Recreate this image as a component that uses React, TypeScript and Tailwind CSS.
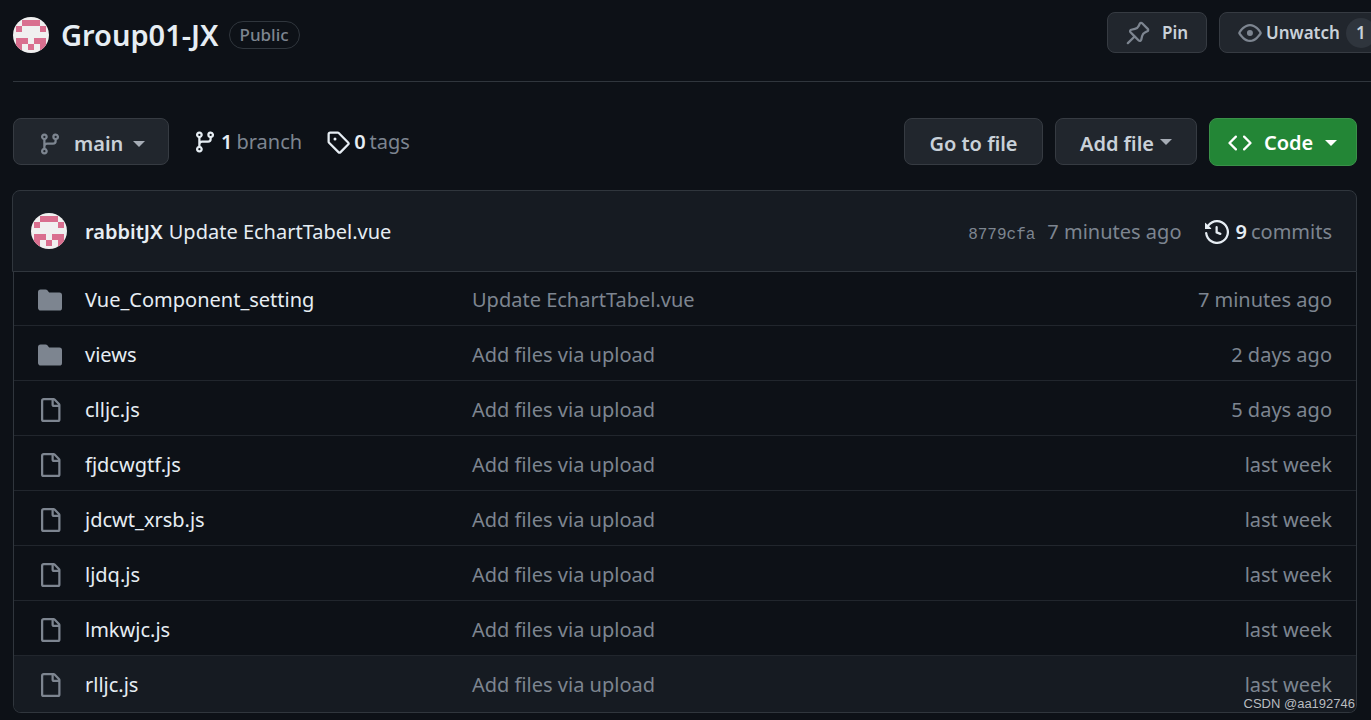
import type { ReactNode } from "react";
import clsx from "clsx";

const icons = {
  branch:
    "M9.5 3.25a2.25 2.25 0 1 1 3 2.122V6A2.5 2.5 0 0 1 10 8.5H6a1 1 0 0 0-1 1v1.128a2.251 2.251 0 1 1-1.5 0V5.372a2.25 2.25 0 1 1 1.5 0v1.836A2.493 2.493 0 0 1 6 7h4a1 1 0 0 0 1-1v-.628A2.25 2.25 0 0 1 9.5 3.25Zm-6 0a.75.75 0 1 0 1.5 0 .75.75 0 0 0-1.5 0Zm8.25-.75a.75.75 0 1 0 0 1.5.75.75 0 0 0 0-1.5ZM4.25 12a.75.75 0 1 0 0 1.5.75.75 0 0 0 0-1.5Z",
  tag: "M1 7.775V2.75C1 1.784 1.784 1 2.75 1h5.025c.464 0 .91.184 1.238.513l6.25 6.25a1.75 1.75 0 0 1 0 2.474l-5.026 5.026a1.75 1.75 0 0 1-2.474 0l-6.25-6.25A1.752 1.752 0 0 1 1 7.775Zm1.5 0c0 .066.026.13.073.177l6.25 6.25a.25.25 0 0 0 .354 0l5.025-5.025a.25.25 0 0 0 0-.354l-6.25-6.25a.25.25 0 0 0-.177-.073H2.75a.25.25 0 0 0-.25.25ZM6 5a1 1 0 1 1 0 2 1 1 0 0 1 0-2Z",
  history:
    "m.427 1.927 1.215 1.215a8.002 8.002 0 1 1-1.6 5.685.75.75 0 1 1 1.493-.154 6.5 6.5 0 1 0 1.18-4.458l1.358 1.358A.25.25 0 0 1 3.896 6H.25A.25.25 0 0 1 0 5.75V2.104a.25.25 0 0 1 .427-.177ZM7.75 4a.75.75 0 0 1 .75.75v2.992l2.028.812a.75.75 0 0 1-.557 1.392l-2.5-1A.751.751 0 0 1 7 8.25v-3.5A.75.75 0 0 1 7.75 4Z",
  file: "M2 1.75C2 .784 2.784 0 3.75 0h6.586c.464 0 .909.184 1.237.513l2.914 2.914c.329.328.513.773.513 1.237v9.586A1.75 1.75 0 0 1 13.25 16h-9.5A1.75 1.75 0 0 1 2 14.25Zm1.75-.25a.25.25 0 0 0-.25.25v12.5c0 .138.112.25.25.25h9.5a.25.25 0 0 0 .25-.25V6h-2.75A1.75 1.75 0 0 1 9 4.25V1.5Zm6.75.062V4.25c0 .138.112.25.25.25h2.688l-.011-.013-2.914-2.914-.013-.011Z",
  folder:
    "M1.75 1A1.75 1.75 0 0 0 0 2.75v10.5C0 14.216.784 15 1.75 15h12.5A1.75 1.75 0 0 0 16 13.25v-8.5A1.75 1.75 0 0 0 14.25 3H7.5a.25.25 0 0 1-.2-.1l-.9-1.2C6.07 1.26 5.55 1 5 1H1.75Z",
  pin: "m11.294.984 3.722 3.722a1.75 1.75 0 0 1-.504 2.826l-1.327.613a3.089 3.089 0 0 0-1.707 2.084l-.584 2.454c-.317 1.332-1.972 1.8-2.94.832L5.75 11.311 1.78 15.28a.749.749 0 1 1-1.06-1.06l3.969-3.97-2.204-2.204c-.968-.968-.5-2.623.832-2.94l2.454-.584a3.08 3.08 0 0 0 2.084-1.707l.613-1.327a1.75 1.75 0 0 1 2.826-.504ZM6.283 9.723l2.732 2.731a.25.25 0 0 0 .42-.119l.584-2.454a4.586 4.586 0 0 1 2.537-3.098l1.328-.613a.25.25 0 0 0 .072-.404l-3.722-3.722a.25.25 0 0 0-.404.072l-.613 1.328a4.584 4.584 0 0 1-3.098 2.537l-2.454.584a.25.25 0 0 0-.119.42l2.731 2.732Z",
  eye: "M8 2c1.981 0 3.671.992 4.933 2.078 1.27 1.091 2.187 2.345 2.637 3.023a1.62 1.62 0 0 1 0 1.798c-.45.678-1.367 1.932-2.637 3.023C11.67 13.008 9.981 14 8 14c-1.981 0-3.671-.992-4.933-2.078C1.797 10.83.88 9.576.43 8.898a1.62 1.62 0 0 1 0-1.798c.45-.677 1.367-1.931 2.637-3.022C4.33 2.992 6.019 2 8 2ZM1.679 7.932a.12.12 0 0 0 0 .136c.411.622 1.241 1.75 2.366 2.717C5.176 11.758 6.527 12.5 8 12.5c1.473 0 2.825-.742 3.955-1.715 1.124-.967 1.954-2.096 2.366-2.717a.12.12 0 0 0 0-.136c-.412-.621-1.242-1.75-2.366-2.717C10.824 4.242 9.473 3.5 8 3.5c-1.473 0-2.825.742-3.955 1.715-1.124.967-1.954 2.096-2.366 2.717ZM8 10a2 2 0 1 1-.001-3.999A2 2 0 0 1 8 10Z",
  code: "m11.28 3.22 4.25 4.25a.75.75 0 0 1 0 1.06l-4.25 4.25a.749.749 0 0 1-1.275-.326.749.749 0 0 1 .215-.734L13.94 8l-3.72-3.72a.749.749 0 0 1 .326-1.275.749.749 0 0 1 .734.215Zm-6.56 0a.751.751 0 0 1 1.042.018.751.751 0 0 1 .018 1.042L2.06 8l3.72 3.72a.749.749 0 0 1-.326 1.275.749.749 0 0 1-.734-.215L.47 8.53a.75.75 0 0 1 0-1.06Z",
};

const files: { name: string; message: string; age: string; folder?: boolean }[] = [
  { name: "Vue_Component_setting", message: "Update EchartTabel.vue", age: "7 minutes ago", folder: true },
  { name: "views", message: "Add files via upload", age: "2 days ago", folder: true },
  { name: "clljc.js", message: "Add files via upload", age: "5 days ago" },
  { name: "fjdcwgtf.js", message: "Add files via upload", age: "last week" },
  { name: "jdcwt_xrsb.js", message: "Add files via upload", age: "last week" },
  { name: "ljdq.js", message: "Add files via upload", age: "last week" },
  { name: "lmkwjc.js", message: "Add files via upload", age: "last week" },
  { name: "rlljc.js", message: "Add files via upload", age: "last week" },
];

function Icon({ name, className }: { name: keyof typeof icons; className?: string }) {
  return (
    <svg viewBox="0 0 16 16" fill="currentColor" aria-hidden="true" className={clsx("size-6 shrink-0", className)}>
      <path d={icons[name]} />
    </svg>
  );
}

function Caret({ className }: { className?: string }) {
  return (
    <svg viewBox="0 0 12 6" fill="currentColor" aria-hidden="true" className={clsx("h-1.5 w-3 shrink-0", className)}>
      <path d="M0 0h12L6 6Z" />
    </svg>
  );
}

function Avatar() {
  return (
    <svg viewBox="0 0 36 36" aria-hidden="true" className="size-9 shrink-0 rounded-full bg-[#f0f0f0]">
      <path
        fill="#d96f8f"
        d="M9 3h18v6H9ZM3 9h6v6H3ZM27 9h6v6h-6ZM3 21h12v6H9v6H3ZM21 21h12v12h-6v-6h-6ZM15 27h6v6h-6Z"
      />
    </svg>
  );
}

function Button({ className, children }: { className?: string; children: ReactNode }) {
  return (
    <button
      type="button"
      className={clsx("flex shrink-0 items-center rounded-lg border font-semibold whitespace-nowrap", className)}
    >
      {children}
    </button>
  );
}

export default function App() {
  return (
    <div className="relative min-h-screen overflow-hidden bg-[#0d1117] font-['Noto_Sans','Open_Sans',sans-serif] text-xl text-[#e6edf3]">
      <header className="ml-[13px] flex h-[82px] items-start justify-between border-b border-[#30363d] pt-3">
        <div className="flex h-[46px] items-center">
          <Avatar />
          <h1 className="ml-3 text-[29px] leading-9 font-semibold">
            <a href="#repo">Group01-JX</a>
          </h1>
          <span className="ml-2.5 rounded-full border border-[#30363d] px-2.5 text-[17px] leading-[26px] font-medium text-[#7d8590]">
            Public
          </span>
        </div>
        {/* the watch button runs off the right edge */}
        <div className="flex w-[264px] shrink-0 gap-3 text-[17px]">
          <Button className="h-[41px] w-25 border-[#363b42] bg-[#21262d] pl-[18px] text-[#c9d1d9]">
            <Icon name="pin" className="mr-3 text-[#7d8590]" />
            Pin
          </Button>
          <Button className="h-[41px] border-[#363b42] bg-[#21262d] pr-4 pl-[18px] text-[#c9d1d9]">
            <Icon name="eye" className="mr-1 text-[#7d8590]" />
            Unwatch
            <span className="ml-1.5 flex size-[30px] items-center justify-center rounded-full bg-[#2f353d]">1</span>
            <Caret className="ml-3" />
          </Button>
        </div>
      </header>

      <main className="pt-9 pr-3.5 pl-3">
        <div className="flex items-start">
          <Button className="ml-px h-[47px] w-39 border-[#363b42] bg-[#21262d] pt-1 pl-6 text-[#c9d1d9]">
            <Icon name="branch" className="mr-3 text-[#7d8590]" />
            main
            <Caret className="ml-2.5 text-[#a6acb5]" />
          </Button>
          <a href="#branches" className="ml-6 flex h-[47px] items-center">
            <Icon name="branch" className="mr-1" />
            <strong className="mr-1 font-semibold">1</strong>
            <span className="text-[#7d8590]">branch</span>
          </a>
          <a href="#tags" className="ml-6 flex h-[47px] items-center">
            <Icon name="tag" className="mr-1" />
            <strong className="mr-1 font-semibold">0</strong>
            <span className="text-[#7d8590]">tags</span>
          </a>
          <div className="ml-auto flex items-start gap-3">
            <Button className="h-[47px] w-[139px] justify-center border-[#363b42] bg-[#21262d] pt-1 text-[#c9d1d9]">
              Go to file
            </Button>
            <Button className="h-[47px] w-[142px] justify-center border-[#363b42] bg-[#21262d] pt-1 text-[#c9d1d9]">
              Add file
              <Caret className="mb-1 ml-1.5 text-[#a6acb5]" />
            </Button>
            <Button className="h-12 w-37 border-[#3a9149] bg-[#238636] pt-0.5 pl-[18px] text-white">
              <Icon name="code" className="mr-3" />
              Code
              <Caret className="ml-3" />
            </Button>
          </div>
        </div>

        <section className="mt-6">
          <div className="flex h-[82px] items-center rounded-t-lg border border-[#30363d] bg-[#161b22] pr-6 pl-[18px]">
            <Avatar />
            <div className="ml-[18px] flex grow items-baseline pt-0.5">
              <a href="#author" className="font-semibold">
                rabbitJX
              </a>
              <a href="#commit" className="ml-1.5">
                Update EchartTabel.vue
              </a>
              <a href="#hash" className="ml-auto font-['Liberation_Mono',monospace] text-base text-[#7d8590]">
                8779cfa
              </a>
              <span className="ml-3 text-[#7d8590]">7 minutes ago</span>
            </div>
            <a href="#commits" className="ml-6 flex items-center pt-0.5">
              <Icon name="history" className="mr-1.5" />
              <strong className="mr-1 font-semibold">9</strong>
              <span className="text-[#7d8590]">commits</span>
            </a>
          </div>
          <div className="ml-px overflow-hidden rounded-b-lg border border-t-0 border-[#30363d]">
            <table className="w-full table-fixed border-separate border-spacing-0 text-left">
              <colgroup>
                <col className="w-[71px]" />
                <col className="w-[387px]" />
                <col />
                <col className="w-60" />
              </colgroup>
              <tbody>
                {files.map((file) => (
                  <tr
                    key={file.name}
                    className="h-[55px] *:border-b *:border-[#21262d] *:pt-1 first:h-[54px] first:*:pt-0.5 last:h-14 last:bg-[#161b22] last:*:border-b-0 last:*:pt-0.5"
                  >
                    <td className="pl-6 text-[#7d8590]">
                      <Icon name={file.folder ? "folder" : "file"} />
                    </td>
                    <td>
                      <a href={`#${file.name}`}>{file.name}</a>
                    </td>
                    <td className="text-[#7d8590]">{file.message}</td>
                    <td className="pr-6 text-right text-[#7d8590]">{file.age}</td>
                  </tr>
                ))}
              </tbody>
            </table>
          </div>
        </section>
      </main>

      <span className="absolute right-4 bottom-2 font-['Liberation_Sans',sans-serif] text-[13px] leading-4 text-[#b9bcc0] text-shadow-xs">
        CSDN @aa192746
      </span>
    </div>
  );
}
